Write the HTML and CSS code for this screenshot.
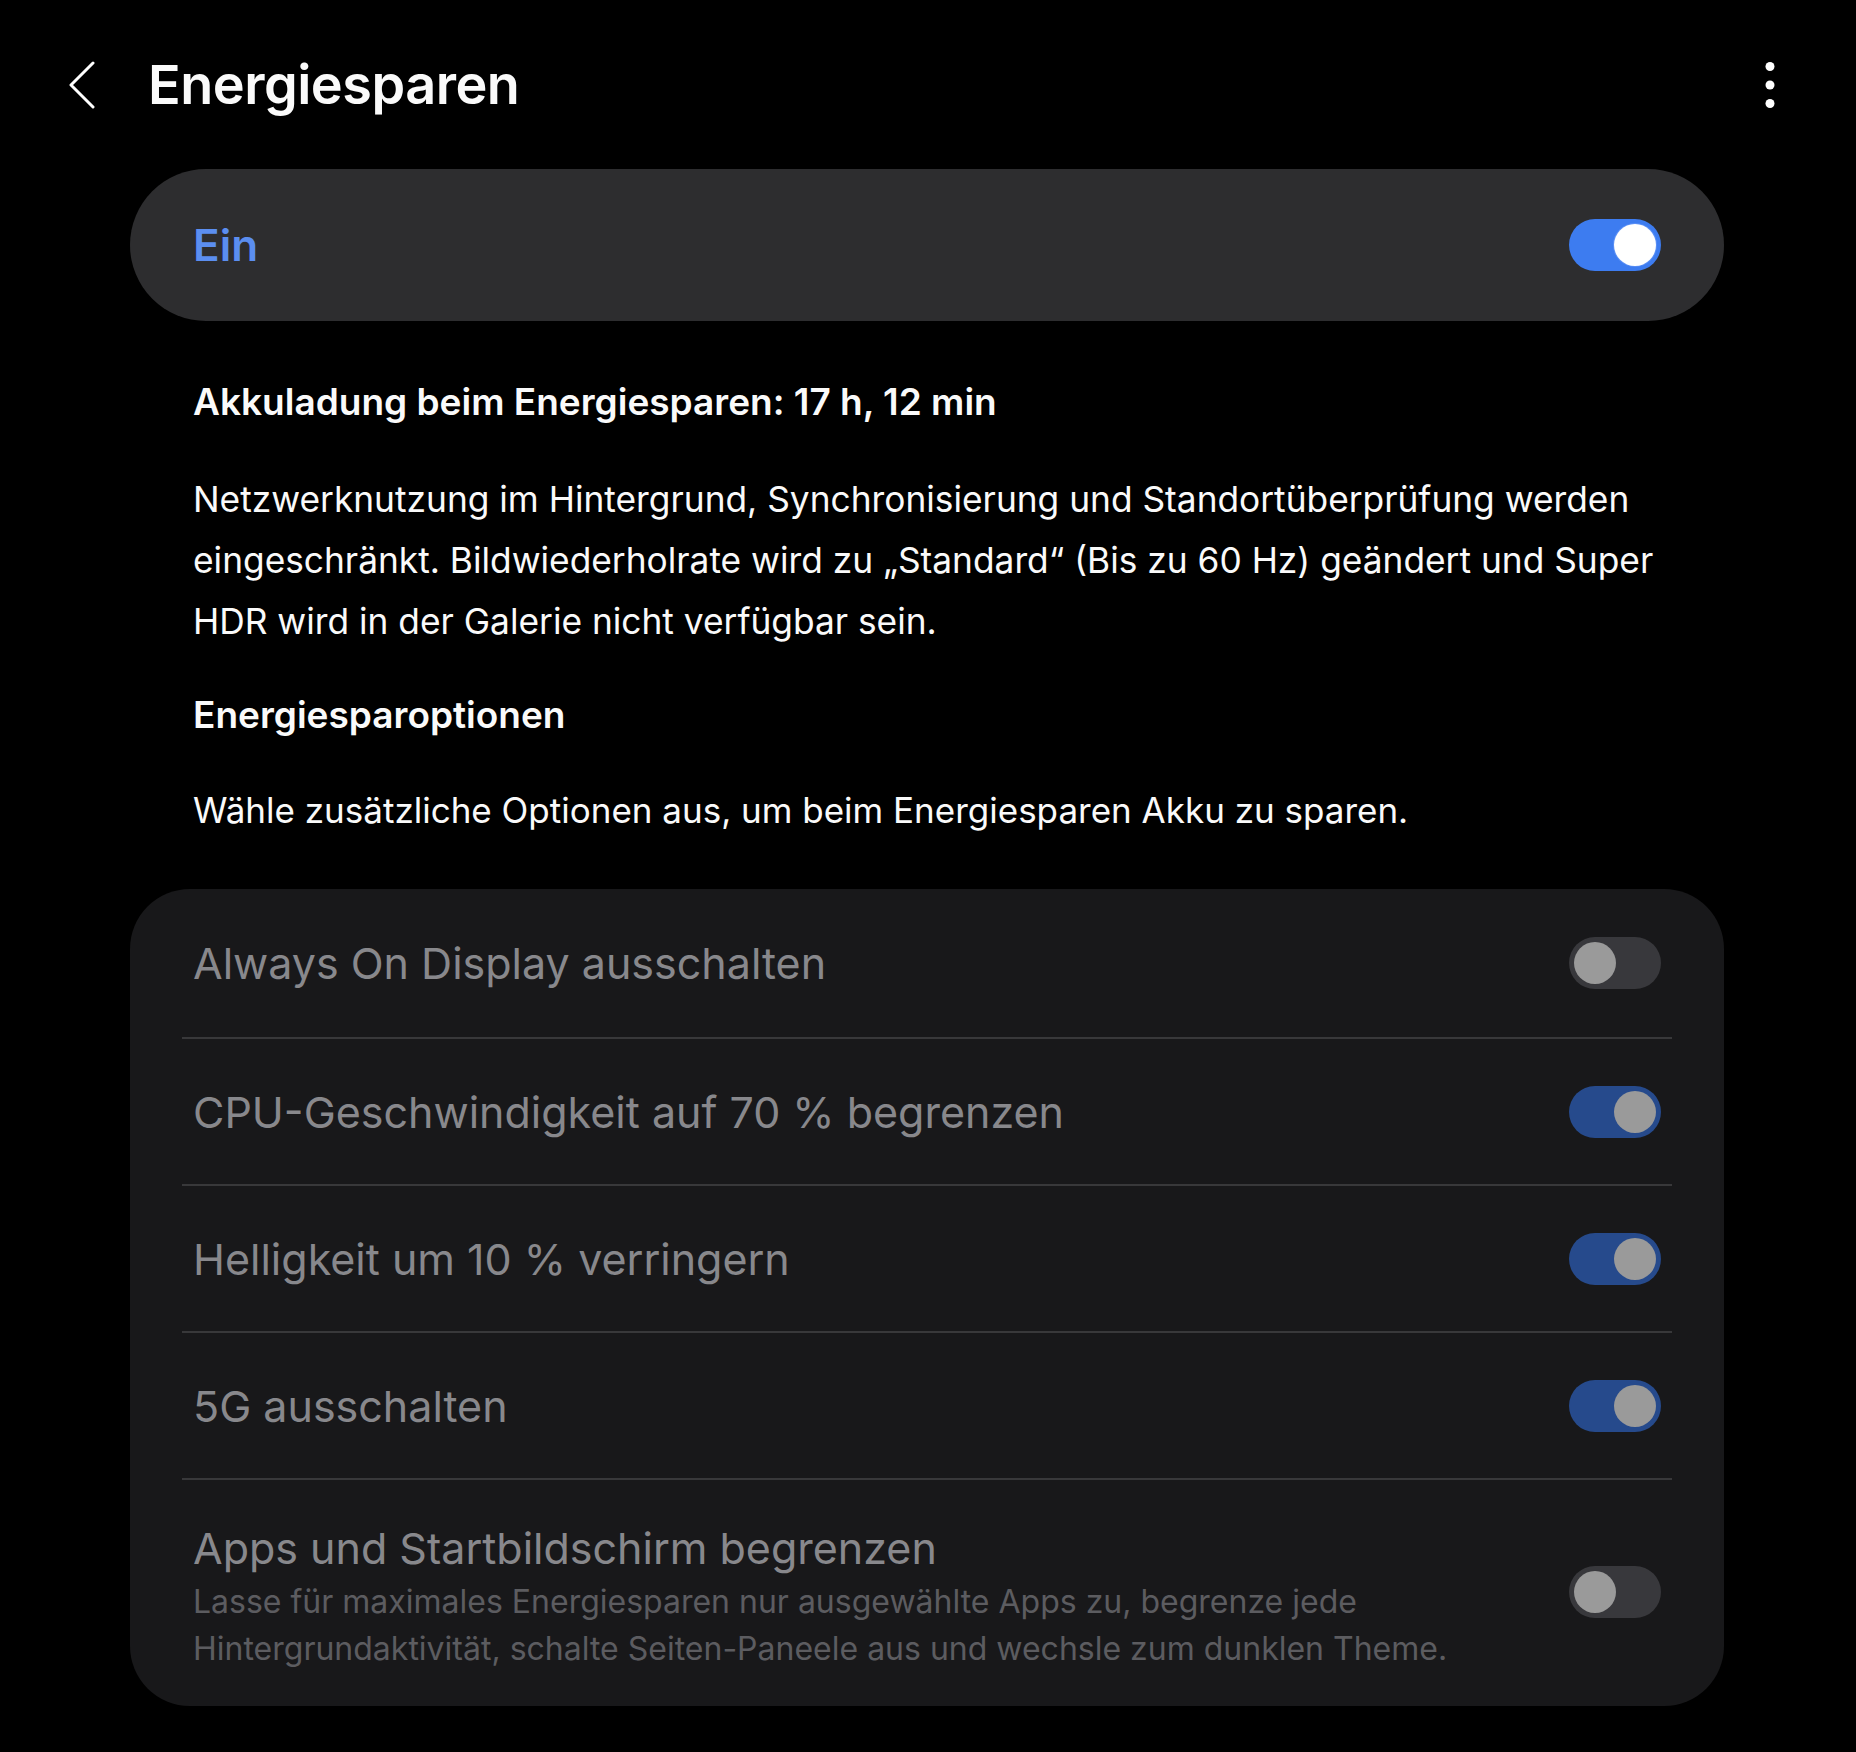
FILE: index.html
```html
<!DOCTYPE html>
<html lang="de">
<head>
  <meta charset="UTF-8">
  <meta name="viewport" content="width=device-width, initial-scale=1.0">
  <title>Energiesparen</title>
  <link rel="stylesheet" href="styles.css">
</head>
<body>
  <header class="topbar">
    <button class="back" aria-label="Zurück">
      <svg width="28" height="48" viewBox="0 0 28 48"><polyline points="25,2 3,24 25,46" fill="none" stroke="#fff" stroke-width="3" stroke-linecap="round" stroke-linejoin="round"/></svg>
    </button>
    <h1>Energiesparen</h1>
    <button class="more" aria-label="Mehr">
      <svg width="12" height="48" viewBox="0 0 12 48"><circle cx="6" cy="5.5" r="4.5" fill="#fff"/><circle cx="6" cy="24" r="4.5" fill="#fff"/><circle cx="6" cy="42.5" r="4.5" fill="#fff"/></svg>
    </button>
  </header>

  <main class="content">
    <div class="master">
      <span class="master-label">Ein</span>
      <div class="switch on"><span class="thumb"></span></div>
    </div>

    <section class="info">
      <h2>Akkuladung beim Energiesparen: 17 h, 12 min</h2>
      <p class="desc">Netzwerknutzung im Hintergrund, Synchronisierung und Standortüberprüfung werden eingeschränkt. Bildwiederholrate wird zu „Standard“ (Bis zu 60 Hz) geändert und Super HDR wird in der Galerie nicht verfügbar sein.</p>
      <h2 class="options-title">Energiesparoptionen</h2>
      <p class="hint">Wähle zusätzliche Optionen aus, um beim Energiesparen Akku zu sparen.</p>
    </section>

    <div class="options">
      <div class="row">
        <span class="row-title">Always On Display ausschalten</span>
        <div class="switch dim"><span class="thumb"></span></div>
      </div>
      <div class="row">
        <span class="row-title">CPU-Geschwindigkeit auf 70 % begrenzen</span>
        <div class="switch dim on"><span class="thumb"></span></div>
      </div>
      <div class="row">
        <span class="row-title">Helligkeit um 10 % verringern</span>
        <div class="switch dim on"><span class="thumb"></span></div>
      </div>
      <div class="row">
        <span class="row-title">5G ausschalten</span>
        <div class="switch dim on"><span class="thumb"></span></div>
      </div>
      <div class="row row-last">
        <div class="row-text">
          <span class="row-title">Apps und Startbildschirm begrenzen</span>
          <span class="row-sub">Lasse für maximales Energiesparen nur ausgewählte Apps zu, begrenze jede Hintergrundaktivität, schalte Seiten-Paneele aus und wechsle zum dunklen Theme.</span>
        </div>
        <div class="switch dim"><span class="thumb"></span></div>
      </div>
    </div>
  </main>
</body>
</html>
```

FILE: styles.css
```css
:root {
  --bg: #000000;
  --text: #fafafa;
  --accent: #5b8ef0;
  --card: #2d2d2f;
  --card-dark: #18181a;
  --divider: #38383a;
  --muted: #88888c;
  --muted-sub: #5c5c60;
}

body {
  margin: 0;
  background: var(--bg);
  color: var(--text);
  font-family: Inter, 'Noto Sans', sans-serif;
}

.topbar {
  display: flex;
  align-items: center;
  height: 169px;
  padding: 0 80px 0 68px;
}

.topbar button {
  background: none;
  border: 0;
  padding: 0;
  display: flex;
  cursor: pointer;
}

.topbar h1 {
  margin: 0 0 0 52px;
  font-size: 54px;
  font-weight: 600;
  letter-spacing: -0.5px;
}

.more {
  margin-left: auto;
}

.content {
  padding: 0 132px 0 130px;
}

.master {
  display: flex;
  align-items: center;
  justify-content: space-between;
  height: 152px;
  padding: 0 63px;
  background: var(--card);
  border-radius: 76px;
}

.master-label {
  color: var(--accent);
  font-size: 44px;
  font-weight: 600;
}

/* switches */
.switch {
  position: relative;
  width: 92px;
  height: 52px;
  border-radius: 26px;
  background: #38383c;
  flex-shrink: 0;
}

.switch .thumb {
  position: absolute;
  top: 5px;
  left: 5px;
  width: 42px;
  height: 42px;
  border-radius: 50%;
  background: #9a9a9a;
}

.switch.on .thumb {
  left: auto;
  right: 5px;
}

.master .switch {
  background: #3d7cf0;
}

.master .switch .thumb {
  background: #fff;
  box-shadow: 0 0 0 1px #5a8ff5;
}

.switch.dim.on {
  background: #264a8c;
}

.info {
  padding: 57px 63px 0;
}

.info h2 {
  margin: 0;
  font-size: 37px;
  font-weight: 600;
  line-height: 48px;
}

.desc {
  margin: 43px 0 0;
  font-size: 35.3px;
  line-height: 61px;
}

.info .options-title {
  margin-top: 39px;
}

.hint {
  margin: 47px 0 0;
  font-size: 35px;
  line-height: 48px;
}

.options {
  margin-top: 55px;
  padding: 0 52px;
  background: var(--card-dark);
  border-radius: 60px;
}

.row {
  display: flex;
  align-items: center;
  justify-content: space-between;
  gap: 40px;
  min-height: 145px;
  padding: 0 11px;
  border-top: 2px solid var(--divider);
}

.row:first-child {
  border-top: 0;
  min-height: 148px;
}

.row-title {
  color: var(--muted);
  font-size: 43px;
  line-height: 52px;
}

.row-last {
  padding: 42px 11px 34px;
}

.row-last .switch {
  margin-bottom: 10px;
}

.row-text {
  display: flex;
  flex-direction: column;
}

.row-sub {
  margin-top: 4px;
  color: var(--muted-sub);
  font-size: 32px;
  line-height: 47px;
}
```
